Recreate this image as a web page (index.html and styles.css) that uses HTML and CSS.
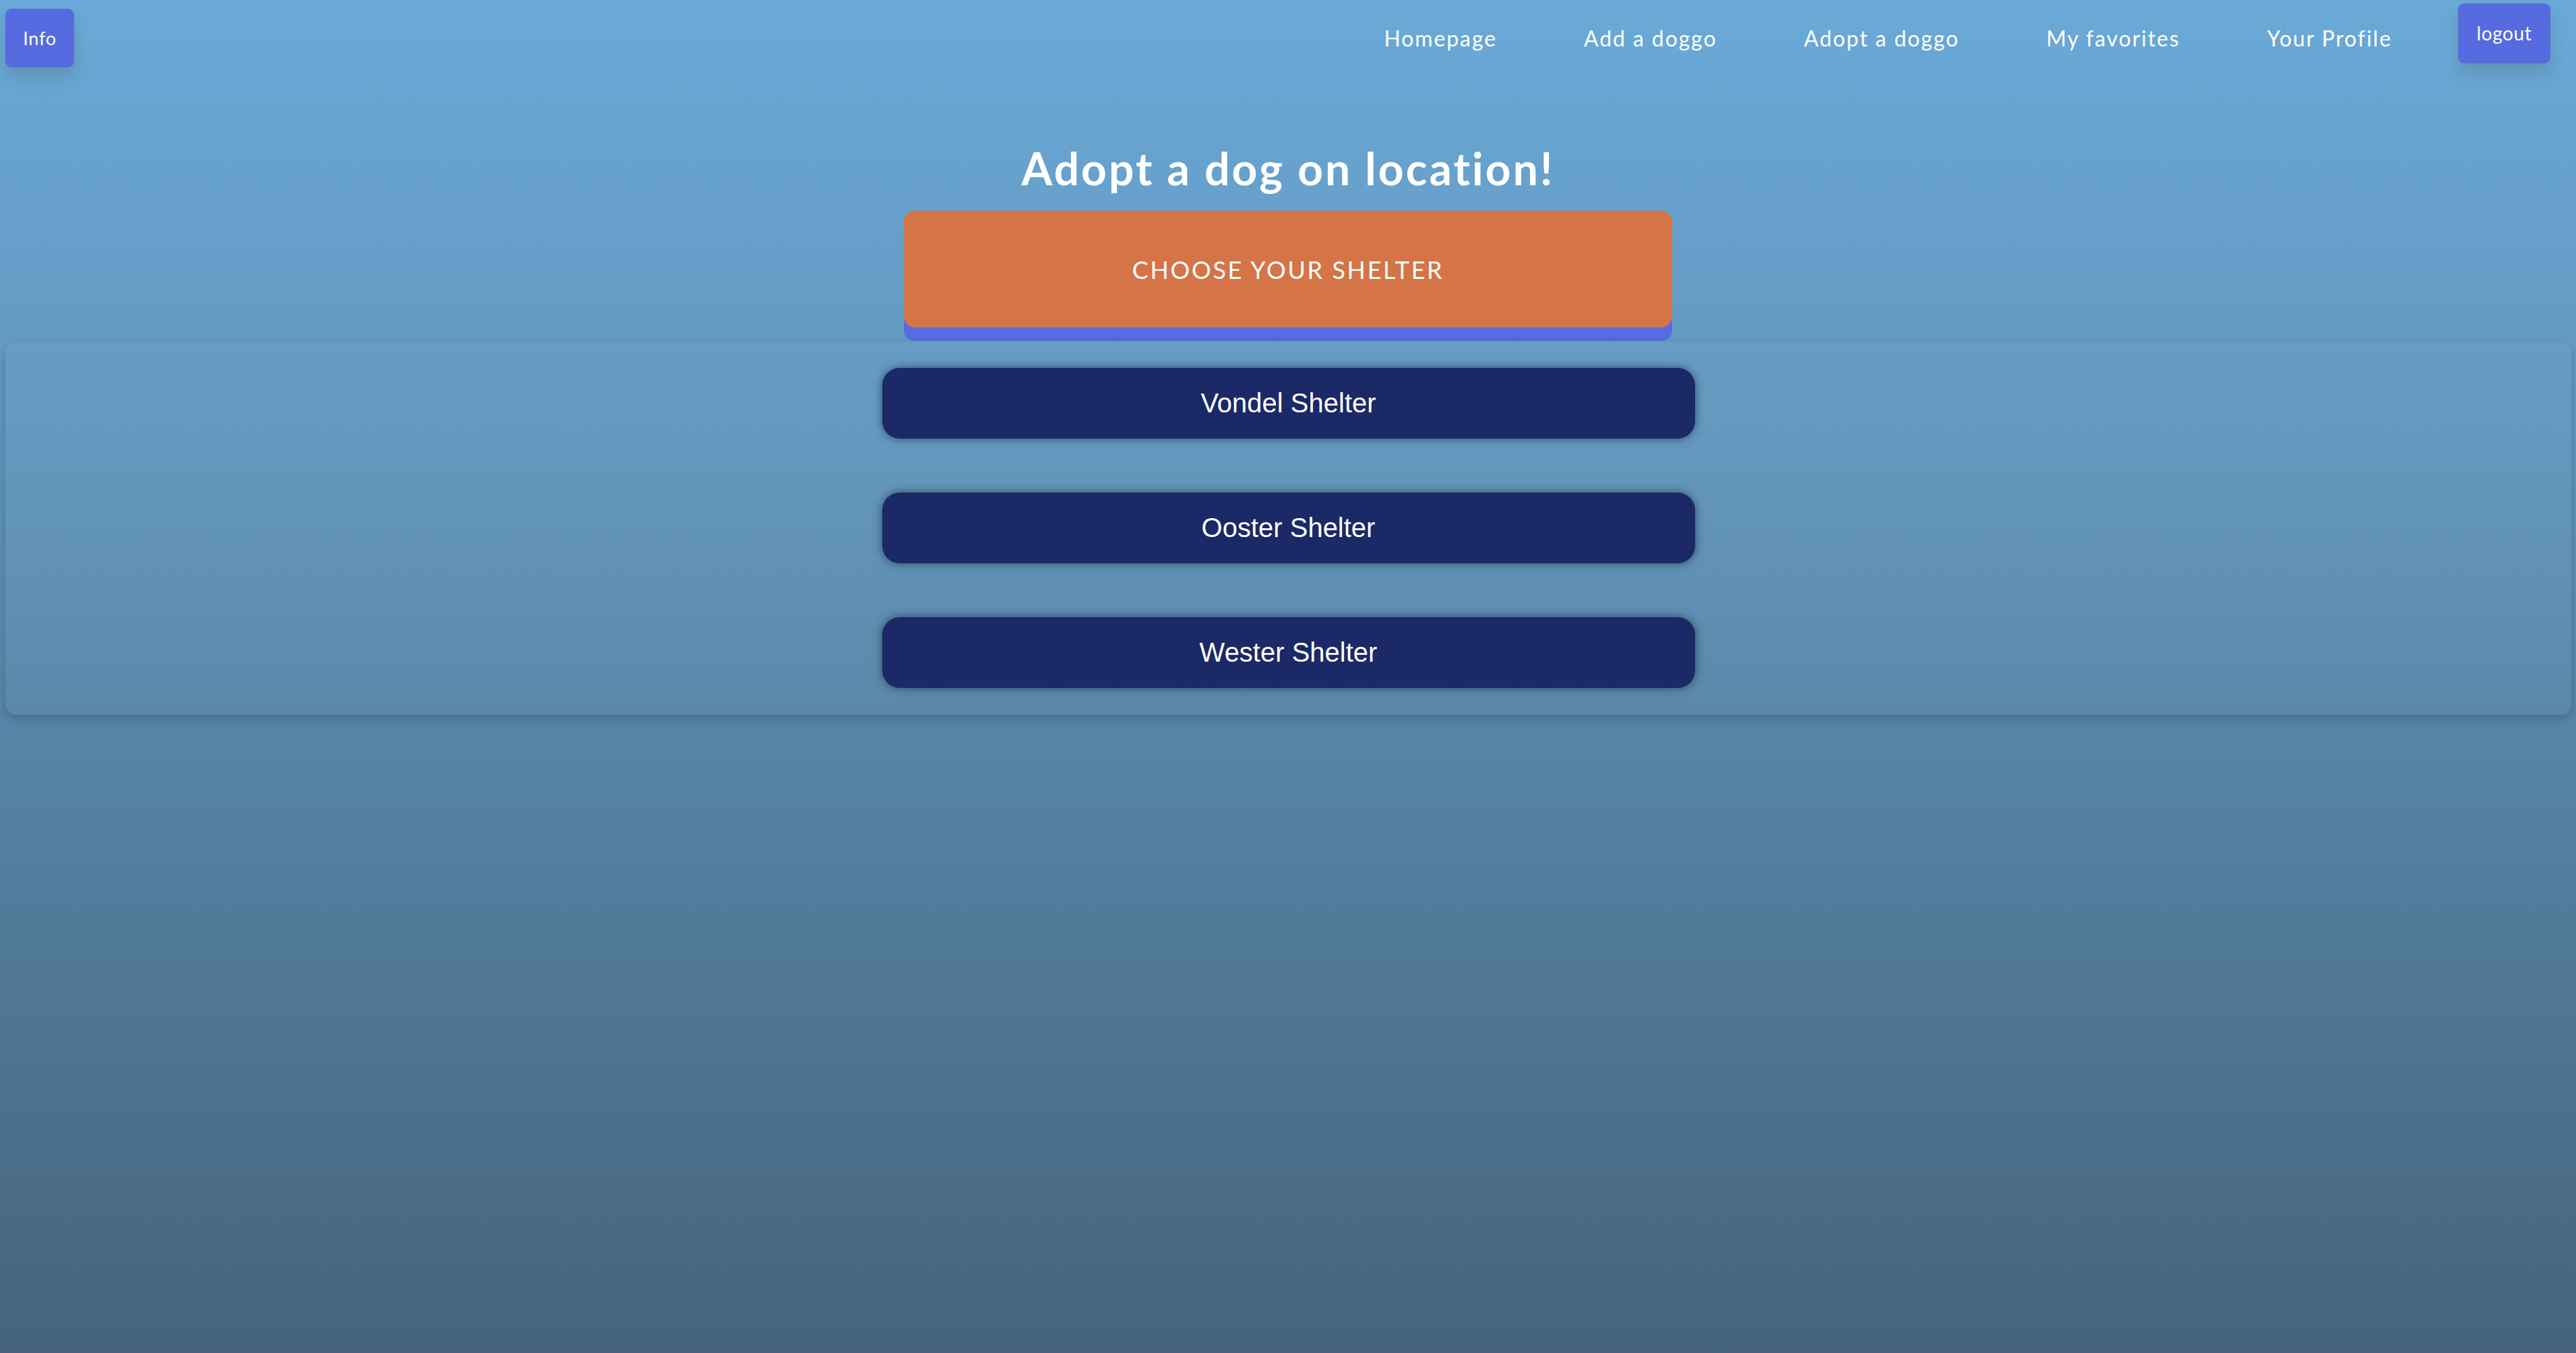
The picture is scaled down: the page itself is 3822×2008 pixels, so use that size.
FILE: index.html
```html
<!DOCTYPE html>
<html lang="en">
<head>
<meta charset="utf-8">
<title>Adopt a dog on location</title>
<link rel="stylesheet" href="styles.css">
</head>
<body>
<div class="page">
  <header class="topbar">
    <button class="info-btn">Info</button>
    <nav class="nav">
      <a class="nav-link" href="#">Homepage</a>
      <a class="nav-link" href="#">Add a doggo</a>
      <a class="nav-link" href="#">Adopt a doggo</a>
      <a class="nav-link" href="#">My favorites</a>
      <a class="nav-link" href="#">Your Profile</a>
    </nav>
    <button class="logout-btn">logout</button>
  </header>

  <main class="content">
    <h1 class="title">Adopt a dog on location!</h1>
    <button class="choose-btn">CHOOSE YOUR SHELTER</button>
    <section class="panel">
      <button class="shelter-btn">Vondel Shelter</button>
      <button class="shelter-btn">Ooster Shelter</button>
      <button class="shelter-btn">Wester Shelter</button>
    </section>
  </main>
</div>
</body>
</html>
```

FILE: styles.css
```css
* {
  box-sizing: border-box;
}

html, body {
  margin: 0;
  padding: 0;
}

body {
  min-height: 100vh;
  background: linear-gradient(180deg, #6aa9d7 0%, #6398c0 30%, #547f9f 62%, #45637c 100%);
  font-family: "Lato", "Noto Sans", sans-serif;
  color: #ffffff;
}

.page {
  min-height: 100vh;
  display: flex;
  flex-direction: column;
}

button {
  font: inherit;
  color: inherit;
  border: none;
  cursor: pointer;
}

/* ---------- top bar ---------- */
.topbar {
  display: flex;
  align-items: flex-start;
  padding: 0 38px 0 8px;
  height: 132px;
}

.info-btn {
  margin-top: 13px;
  width: 102px;
  height: 87px;
  border-radius: 9px;
  background: #566be0;
  box-shadow: 0 14px 22px rgba(60, 70, 40, 0.18);
  font-size: 27px;
  letter-spacing: 0.8px;
  display: flex;
  align-items: center;
  justify-content: center;
  padding: 0;
}

.nav {
  margin-left: auto;
  margin-right: 98px;
  display: flex;
  gap: 129px;
  padding-top: 37px;
}

.nav-link {
  color: #ffffff;
  text-decoration: none;
  font-size: 32px;
  line-height: 40px;
  letter-spacing: 1.9px;
}

.logout-btn {
  margin-top: 5px;
  width: 137px;
  height: 89px;
  border-radius: 9px;
  background: #566be0;
  box-shadow: 0 14px 22px rgba(60, 70, 40, 0.18);
  font-size: 28px;
  line-height: 34px;
  letter-spacing: 0.6px;
  padding: 27px 0 0;
  display: flex;
  justify-content: center;
  align-items: flex-start;
}

/* ---------- content ---------- */
.content {
  display: flex;
  flex-direction: column;
  align-items: center;
}

.title {
  margin: 0;
  font-size: 66px;
  font-weight: 700;
  line-height: 80px;
  margin-top: 78px;
  letter-spacing: 3px;
}

.choose-btn {
  margin-top: 23px;
  width: 1140px;
  height: 173px;
  border-radius: 16px;
  background: #d57446;
  box-shadow: 0 20px 0 #566ce0;
  font-size: 36px;
  letter-spacing: 2.6px;
}

.panel {
  margin-top: 21px;
  align-self: stretch;
  margin-left: 8px;
  margin-right: 7px;
  padding: 39px 0 40px;
  border-radius: 16px;
  background: rgba(255, 255, 255, 0.02);
  box-shadow: 0 6px 14px rgba(20, 40, 60, 0.28);
  display: flex;
  flex-direction: column;
  align-items: center;
  gap: 80px;
}

.shelter-btn {
  width: 1206px;
  height: 105px;
  border-radius: 26px;
  background: #1b2966;
  box-shadow: 0 0 14px rgba(10, 15, 35, 0.55);
  font-family: "Liberation Sans", Arial, sans-serif;
  font-size: 40px;
  color: #ffffff;
}
```
